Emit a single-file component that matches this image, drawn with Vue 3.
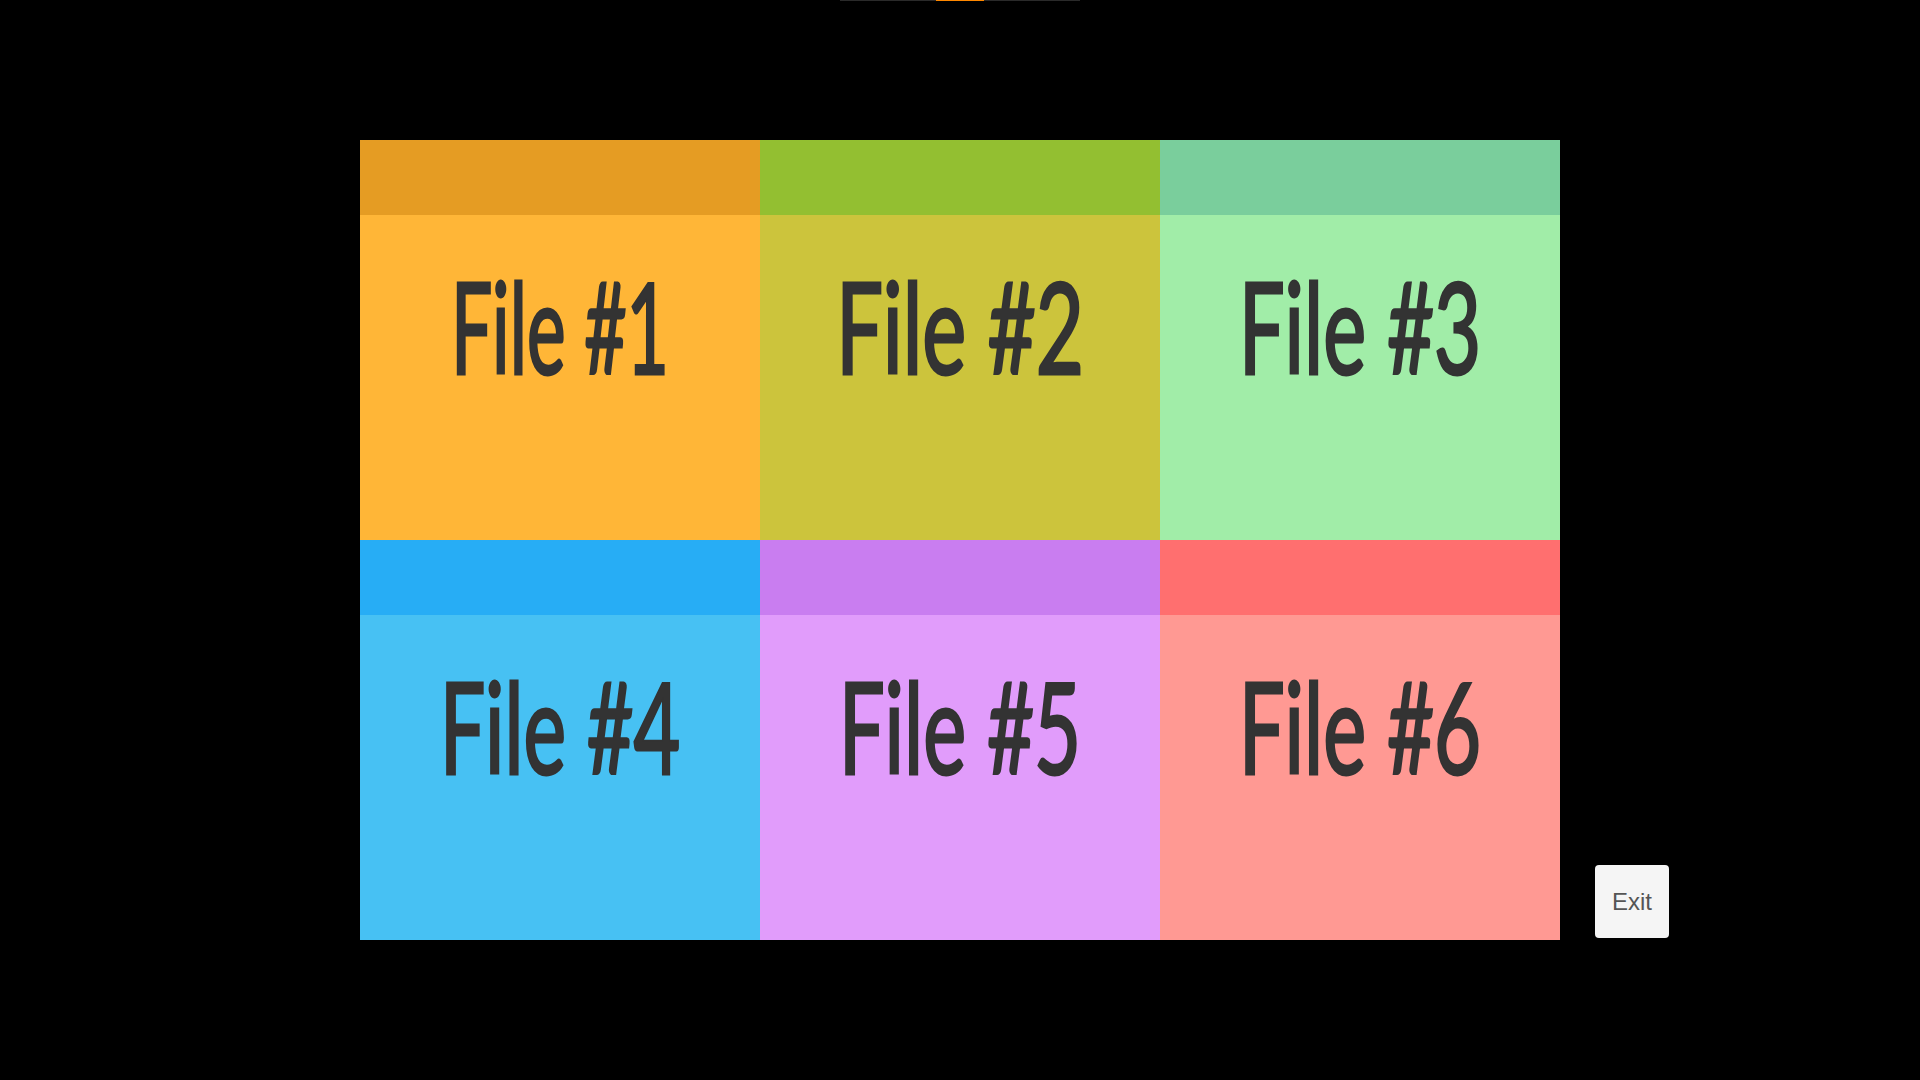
<template>
  <div class="viewer">
    <div class="progress">
      <span class="progress-done"></span>
    </div>

    <div class="board">
      <div
        v-for="file in files"
        :key="file.name"
        class="file-card"
        :class="file.tone"
      >
        <div class="file-band"></div>
        <div class="file-body">
          <span class="file-name">{{ file.name }}</span>
        </div>
      </div>

      <button class="exit-btn">Exit</button>
    </div>
  </div>
</template>

<script setup>
const files = [
  { name: 'File #1', tone: 'tone-orange' },
  { name: 'File #2', tone: 'tone-olive' },
  { name: 'File #3', tone: 'tone-green' },
  { name: 'File #4', tone: 'tone-blue' },
  { name: 'File #5', tone: 'tone-purple' },
  { name: 'File #6', tone: 'tone-red' }
]
</script>

<style>
html,
body {
  background: #000;
}
</style>

<style scoped>
.viewer {
  position: relative;
  height: 1080px;
  display: flex;
  justify-content: center;
  align-items: center;
  background: #000;
  overflow: hidden;
}

.progress {
  position: absolute;
  top: 0;
  left: 840px;
  width: 240px;
  height: 1px;
  display: flex;
  justify-content: center;
  background: #2a2a2a;
}

.progress-done {
  width: 48px;
  background: #ff8800;
}

.board {
  position: relative;
  display: grid;
  grid-template-columns: repeat(3, 400px);
  grid-template-rows: repeat(2, 400px);
}

.file-card {
  display: flex;
  flex-direction: column;
}

.file-band {
  height: 75px;
  flex-shrink: 0;
}

.file-body {
  flex: 1;
  display: flex;
  justify-content: center;
  padding-top: 46px;
}

.file-name {
  display: inline-block;
  height: 130px;
  font-family: 'Lato', 'Liberation Sans', sans-serif;
  font-size: 126px;
  font-weight: 400;
  line-height: 130px;
  white-space: nowrap;
  color: #333;
  -webkit-text-stroke: 3px #333;
  paint-order: stroke;
  transform: scaleX(0.645);
}

.tone-orange .file-name { transform: scaleX(0.58); }
.tone-olive .file-name { transform: scaleX(0.66); }
.tone-blue .file-name { transform: scaleX(0.64); }

.tone-orange .file-band { background: #e59c23; }
.tone-orange .file-body { background: #ffb637; }
.tone-olive .file-band { background: #93bf31; }
.tone-olive .file-body { background: #ccc43c; }
.tone-green .file-band { background: #7ace9c; }
.tone-green .file-body { background: #a1eda8; }
.tone-blue .file-band { background: #27adf5; }
.tone-blue .file-body { background: #47c1f3; }
.tone-purple .file-band { background: #c97df0; }
.tone-purple .file-body { background: #e19cfb; }
.tone-red .file-band { background: #ff6f6f; }
.tone-red .file-body { background: #ff9993; }

.exit-btn {
  position: absolute;
  left: calc(100% + 35px);
  bottom: 2px;
  width: 74px;
  height: 73px;
  padding: 0;
  border: none;
  border-radius: 4px;
  background: #f5f5f5;
  color: #555;
  font-family: 'Liberation Sans', Arial, sans-serif;
  font-size: 24px;
}
</style>
